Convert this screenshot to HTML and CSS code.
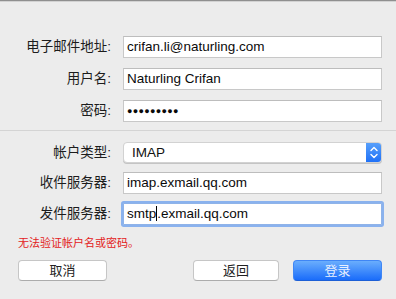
FILE: index.html
```html
<!DOCTYPE html>
<html lang="zh">
<head>
<meta charset="utf-8">
<link rel="stylesheet" href="styles.css">
</head>
<body>
<div class="window">
  <div class="form top">
    <label class="lbl">电子邮件地址:</label>
    <div class="field">crifan.li@naturling.com</div>
    <label class="lbl">用户名:</label>
    <div class="field">Naturling Crifan</div>
    <label class="lbl">密码:</label>
    <div class="field dots">●●●●●●●●●</div>
  </div>
  <div class="sep"></div>
  <div class="form bottom">
    <label class="lbl">帐户类型:</label>
    <div class="select">
      <span class="sel-text">IMAP</span>
      <span class="stepper">
        <svg width="16" height="21" viewBox="0 0 16 21">
          <path d="M5 8.5 L8 5.5 L11 8.5" fill="none" stroke="#fff" stroke-width="1.4" stroke-linecap="round" stroke-linejoin="round"/>
          <path d="M5 12.5 L8 15.5 L11 12.5" fill="none" stroke="#fff" stroke-width="1.4" stroke-linecap="round" stroke-linejoin="round"/>
        </svg>
      </span>
    </div>
    <label class="lbl">收件服务器:</label>
    <div class="field">imap.exmail.qq.com</div>
    <label class="lbl">发件服务器:</label>
    <div class="field focus">smtp<span class="caret"></span>.exmail.qq.com</div>
  </div>
  <div class="error">无法验证帐户名或密码。</div>
  <div class="buttons">
    <button class="btn">取消</button>
    <div class="right">
      <button class="btn">返回</button>
      <button class="btn primary">登录</button>
    </div>
  </div>
</div>
</body>
</html>
```
FILE: styles.css
```css
html, body {
  margin: 0;
  padding: 0;
  background: #ececec;
}
body {
  font-family: "Liberation Sans", "Noto Sans CJK SC", sans-serif;
  font-size: 13px;
  color: #1a1a1a;
}
.window {
  width: 396px;
  height: 299px;
  box-sizing: border-box;
  border-top: 1px solid #8f8f8f;
  box-shadow: inset 0 1px 0 #d2d2d2;
  padding-top: 35px;
}
.form {
  display: grid;
  grid-template-columns: 111px 259px;
  column-gap: 12px;
  align-items: center;
}
.top {
  grid-auto-rows: 22px;
  row-gap: 10px;
}
.bottom {
  grid-template-rows: 21px 22px 22px;
  row-gap: 9px;
  margin-top: 11px;
}
.lbl {
  text-align: right;
  font-size: 13.5px;
  color: #1c1c1c;
  line-height: 22px;
}
.field {
  height: 22px;
  box-sizing: border-box;
  background: #fff;
  border: 1px solid #c8c8c8;
  border-top-color: #bdbdbd;
  padding: 0 3px;
  line-height: 20px;
  font-size: 13.5px;
  color: #0a0a0a;
  white-space: nowrap;
}
.dots {
  font-size: 9px;
  letter-spacing: 0.3px;
  line-height: 20px;
}
.focus {
  border-color: #8fb3e8;
  box-shadow: 0 0 0 2px #8ab2ee;
  border-radius: 1px;
}
.caret {
  display: inline-block;
  width: 1px;
  height: 15px;
  background: #000;
  vertical-align: -3px;
}
.sep {
  height: 1px;
  background: #d4d4d4;
  margin-top: 8px;
}
.select {
  height: 21px;
  box-sizing: border-box;
  background: #fff;
  border: 1px solid #d2d2d2;
  border-radius: 4px;
  display: flex;
  align-items: center;
  justify-content: space-between;
  overflow: hidden;
  box-shadow: 0 1px 0 #c4c4c4;
}
.sel-text {
  padding-left: 8px;
  font-size: 13.5px;
  color: #111;
}
.stepper {
  width: 16px;
  height: 21px;
  margin-right: -1px;
  background: linear-gradient(#5aa2fb, #1d6ff7);
  border-radius: 0 4px 4px 0;
  display: flex;
}
.error {
  margin: 11px 0 0 18px;
  font-size: 11px;
  line-height: 14px;
  color: #e3201b;
}
.buttons {
  display: flex;
  justify-content: space-between;
  margin: 10px 14px 0 18px;
}
.right {
  display: flex;
  gap: 14px;
}
.btn {
  font-family: "Liberation Sans", "Noto Sans CJK SC", sans-serif;
  font-size: 13px;
  color: #222;
  width: 89px;
  height: 21px;
  padding: 0;
  background: #fff;
  border: 1px solid #c6c6c6;
  border-bottom-color: #acacac;
  border-radius: 4px;
  line-height: 19px;
}
.right .btn:first-child {
  width: 86px;
}
.primary {
  color: #e8f0ff;
  background: linear-gradient(#6aaefd, #1a6cfa);
  border-color: #3f86f5;
  border-bottom-color: #1d5fd6;
}
```
